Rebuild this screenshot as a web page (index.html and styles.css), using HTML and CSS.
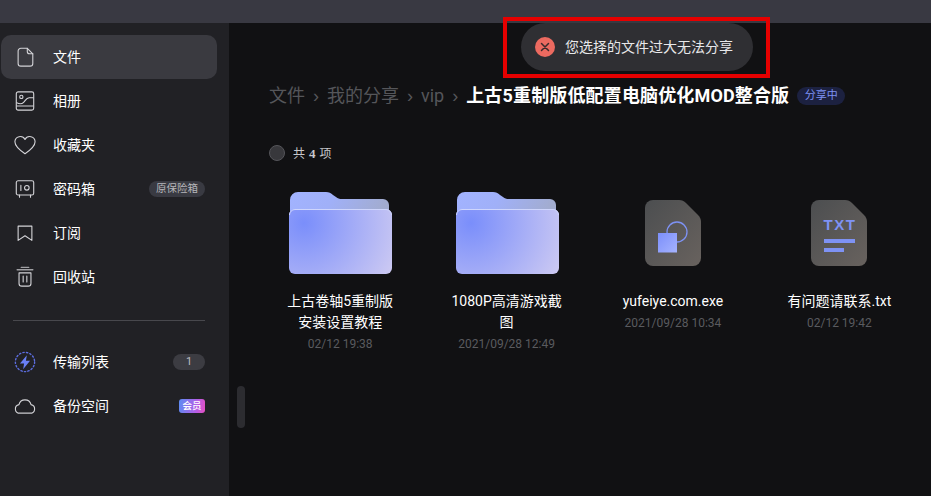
FILE: index.html
```html
<!DOCTYPE html>
<html lang="zh-CN">
<head>
<meta charset="utf-8">
<title>文件</title>
<link rel="stylesheet" href="styles.css">
</head>
<body>
<div class="app">
  <header class="topbar"></header>
  <div class="body">
    <aside class="sidebar">
      <nav class="nav">
        <a class="item active">
          <svg class="icon" viewBox="0 0 24 24"><path d="M7.500 2.500h7l6 6v10.500a3 3 0 0 1-3 3H7.500a3 3 0 0 1-3-3V5.500a3 3 0 0 1 3-3z"/><path d="M14.500 2.500v3.500a2.500 2.500 0 0 0 2.500 2.500h3.500"/></svg>
          <span class="label">文件</span>
        </a>
        <a class="item">
          <svg class="icon" viewBox="0 0 24 24"><rect x="2.500" y="2" width="19" height="20" rx="2"/><circle cx="8" cy="7.500" r="1.800"/><path d="M3 14c3 1.500 5.500 1.500 7.500-.5s3-5 6-5H21M3 17.500h18"/></svg>
          <span class="label">相册</span>
        </a>
        <a class="item">
          <svg class="icon" viewBox="0 0 24 24"><path d="M12 21.500C6 17.500 1 13.500 1 8.500A5.800 5.800 0 0 1 12 6a5.800 5.800 0 0 1 11 2.500c0 5-5 9-11 13z"/></svg>
          <span class="label">收藏夹</span>
        </a>
        <a class="item">
          <svg class="icon" viewBox="0 0 24 24"><rect x="2.500" y="3" width="19" height="15.500" rx="2"/><path d="M7.500 8v5.500M6 18.500v2.500M18 18.500v2.500"/><circle cx="14" cy="10.700" r="2.500"/></svg>
          <span class="label">密码箱</span>
          <span class="pill">原保险箱</span>
        </a>
        <a class="item">
          <svg class="icon" viewBox="0 0 24 24"><path d="M4.500 4.500h15v15.500l-7.500-5-7.500 5z"/></svg>
          <span class="label">订阅</span>
        </a>
        <a class="item">
          <svg class="icon" viewBox="0 0 24 24"><path class="thick" d="M3.500 4h17M8 1.500h8"/><path d="M5.500 7.500h13V19a3 3 0 0 1-3 3h-7a3 3 0 0 1-3-3zM10 11v6.500M14 11v6.500"/></svg>
          <span class="label">回收站</span>
        </a>
      </nav>
      <div class="divider"></div>
      <nav class="nav">
        <a class="item">
          <svg class="icon" viewBox="0 0 24 24"><circle class="dotted" cx="12" cy="12" r="10.500"/><path class="bolt" d="M14 4.500 6.500 13.500h4.500l-1 6.500 7.500-9.500h-4.500z"/></svg>
          <span class="label">传输列表</span>
          <span class="count">1</span>
        </a>
        <a class="item">
          <svg class="icon" viewBox="0 0 24 24"><path d="M6 20a4.800 4.800 0 0 1-.6-9.500 6.800 6.800 0 0 1 13.200 0A4.800 4.800 0 0 1 18 20z"/><path class="thick" d="M5.500 20h13"/></svg>
          <span class="label">备份空间</span>
          <span class="vip">会员</span>
        </a>
      </nav>
      <div class="scrollthumb"></div>
    </aside>
    <main class="main">
      <div class="crumbs">
        <span class="crumb">文件</span><span class="sep">›</span>
        <span class="crumb">我的分享</span><span class="sep">›</span>
        <span class="crumb">vip</span><span class="sep">›</span>
        <strong class="current">上古5重制版低配置电脑优化MOD整合版</strong>
        <span class="sharing">分享中</span>
      </div>
      <div class="summary">
        <span class="radio"></span>
        <span class="total">共 <b>4</b> 项</span>
      </div>
      <div class="grid">
        <article class="file">
          <svg class="thumb" viewBox="0 0 104 86">
            <use href="#folder-art"/>
          </svg>
          <div class="name">上古卷轴5重制版安装设置教程</div>
          <div class="date">02/12 19:38</div>
        </article>
        <article class="file">
          <svg class="thumb" viewBox="0 0 104 86">
            <use href="#folder-art"/>
          </svg>
          <div class="name">1080P高清游戏截图</div>
          <div class="date">2021/09/28 12:49</div>
        </article>
        <article class="file">
          <svg class="thumb" viewBox="0 0 104 86">
            <use href="#doc-art"/>
            <circle cx="56" cy="43" r="10" fill="none" stroke="#7e92f4" stroke-width="1.300"/>
            <rect x="37" y="44" width="19" height="19.500" fill="url(#sq)"/>
          </svg>
          <div class="name">yufeiye.com.exe</div>
          <div class="date">2021/09/28 10:34</div>
        </article>
        <article class="file">
          <svg class="thumb" viewBox="0 0 104 86">
            <use href="#doc-art"/>
            <text x="53" y="41" class="txt">TXT</text>
            <rect x="37" y="50" width="31" height="4" fill="#7e92f4"/>
            <rect x="37" y="59" width="20" height="4" fill="#7e92f4"/>
          </svg>
          <div class="name">有问题请联系.txt</div>
          <div class="date">02/12 19:42</div>
        </article>
      </div>
    </main>
  </div>
  <div class="toast">
    <span class="toast-icon"><svg viewBox="0 0 20 20"><path d="M6.500 6.500l7 7M13.500 6.500l-7 7"/></svg></span>
    <span class="toast-text">您选择的文件过大无法分享</span>
  </div>
  <div class="highlight"></div>
</div>
<svg class="defs" width="0" height="0" aria-hidden="true">
  <defs>
    <linearGradient id="back" x1="0" y1="0" x2="1" y2="0.200"><stop offset="0" stop-color="#a2b3ff"/><stop offset="0.450" stop-color="#a0b0f8"/><stop offset="1" stop-color="#a2accf"/></linearGradient>
    <radialGradient id="front" gradientUnits="userSpaceOnUse" cx="16" cy="34" r="105"><stop offset="0" stop-color="#7a8efb"/><stop offset="1" stop-color="#d0ccf2"/></radialGradient>
    <linearGradient id="doc" x1="0" y1="0" x2="1" y2="1"><stop offset="0" stop-color="#4c4e50"/><stop offset="1" stop-color="#68625e"/></linearGradient>
    <linearGradient id="sq" x1="0" y1="0" x2="1" y2="1"><stop offset="0" stop-color="#7c8ffa"/><stop offset="1" stop-color="#a5b3ff"/></linearGradient>
    <g id="folder-art">
      <path fill="url(#back)" d="M2 11a8 8 0 0 1 8-8h28c3 0 5 1 7 3l3 2c2 1.500 3 2 6 2h41a6 6 0 0 1 6 6v20H2z"/>
      <rect x="1" y="20" width="103" height="65" rx="6" fill="url(#front)"/>
      <path d="M1.500 26a5.500 5.500 0 0 1 5.500-5.500h91a5.500 5.500 0 0 1 5.500 5.500" fill="none" stroke="#cfd6fd" stroke-width="1"/>
    </g>
    <path id="doc-art" fill="url(#doc)" d="M24 19a8 8 0 0 1 8-8h26c3 0 5 1 7 3l12 12c2 2 3 4 3 7v36a8 8 0 0 1-8 8H32a8 8 0 0 1-8-8z"/>
  </defs>
</svg>
</body>
</html>
```
FILE: styles.css
```css
* { box-sizing: border-box; }
html, body { margin: 0; height: 100%; overflow: hidden; }
body {
  font-family: Roboto, "Noto Sans CJK SC", sans-serif;
  background: #111113;
  color: #fff;
}
.app { position: relative; width: 931px; height: 496px; display: flex; flex-direction: column; }
.topbar { height: 23px; flex: none; background: #393942; }
.body { flex: 1; display: flex; min-height: 0; }

.sidebar { position: relative; width: 229px; flex: none; background: #212125; padding: 12px 12px 0 1px; }
.nav { display: flex; flex-direction: column; }
.item { height: 44px; display: flex; align-items: center; padding: 0 12px 0 13px; border-radius: 10px; }
.item.active { background: #3a3a40; }
.icon { width: 22px; height: 22px; flex: none; fill: none; stroke: #d4d4d8; stroke-width: 1.200; stroke-linejoin: round; stroke-linecap: round; }
.icon .thick { stroke-width: 1.600; stroke: #a0a0a4; }
.icon .dotted { stroke: #5d6ee0; stroke-width: 1.500; stroke-dasharray: 1.500 2.400; }
.icon .bolt { fill: #6a80f5; stroke: none; }
.label { margin-left: 17px; font-size: 14px; line-height: 20px; color: #fff; }
.pill { margin-left: auto; height: 16px; padding: 0 7px; border-radius: 8px; background: #393a42; color: #b6b6ba; font-size: 10.500px; line-height: 16px; }
.count { margin-left: auto; width: 32px; height: 16px; border-radius: 8px; background: #3c3c42; color: #bdbdc1; font-size: 11px; line-height: 16px; text-align: center; }
.vip { margin-left: auto; width: 26px; height: 14px; border-radius: 3px; background: linear-gradient(100deg, #5b8cf2, #b15fe8 65%, #e84fc0); color: #fff; font-size: 9.500px; line-height: 14px; text-align: center; font-weight: 500; }
.divider { height: 1px; margin: 21px 12px 19px 12px; background: #48484d; }
.scrollthumb { position: absolute; left: 237px; top: 363px; width: 8px; height: 42px; border-radius: 4px; background: #2c2c30; }

.main { flex: 1; min-width: 0; padding: 58px 0 0 28px; }
.crumbs { height: 30px; margin-left: 12px; display: flex; align-items: center; white-space: nowrap; }
.crumb { font-size: 18px; line-height: 30px; color: #55565a; }
.sep { width: 22px; text-align: center; font-size: 18px; line-height: 30px; color: #55565a; font-family: "Liberation Sans", sans-serif; }
.current { font-size: 18px; line-height: 30px; font-weight: 700; color: #fff; letter-spacing: 0.150px; }
.sharing { margin-left: 8px; width: 48px; height: 18px; border-radius: 9px; background: #1c2140; color: #7e92f4; font-size: 11px; line-height: 18px; text-align: center; }

.summary { display: flex; align-items: center; margin: 32px 0 0 12px; height: 20px; }
.radio { width: 16px; height: 16px; border-radius: 50%; background: #38383c; border: 1px solid #55555a; }
.total { margin: 2px 0 0 8px; font-size: 12px; color: #c8c8cc; line-height: 20px; word-spacing: 1px; }
.total b { font-family: "Liberation Serif", serif; font-size: 13px; font-weight: 700; }

.grid { display: flex; margin-top: 26px; }
.file { width: 166.400px; flex: none; display: flex; flex-direction: column; align-items: center; }
.thumb { display: block; width: 104px; height: 86px; flex: none; overflow: visible; }
.name { width: 112px; margin-top: 16px; font-size: 14px; line-height: 21px; color: #fff; text-align: center; word-break: break-all; }
.file:nth-child(n+3) .name { width: 140px; }
.date { margin-top: 2px; font-size: 12px; line-height: 18px; color: #5a5b5f; white-space: nowrap; }
.txt { font-family: "Liberation Sans", sans-serif; font-weight: 700; font-size: 15px; letter-spacing: 1.500px; fill: #7e92f4; text-anchor: middle; }
.defs { position: absolute; }

.toast { position: absolute; left: 521px; top: 23px; width: 232px; height: 48px; border-radius: 24px; background: #2f2f33; display: flex; align-items: center; padding-left: 14px; }
.toast-icon { width: 20px; height: 20px; border-radius: 50%; background: #ec6a60; flex: none; }
.toast-icon svg { display: block; width: 20px; height: 20px; fill: none; stroke: #3a2a2c; stroke-width: 1.500; stroke-linecap: round; }
.toast-text { margin-left: 10px; font-size: 14px; color: #e8e8ea; white-space: nowrap; line-height: 20px; }
.highlight { position: absolute; left: 503px; top: 17px; width: 267px; height: 61px; border: 4px solid #e60000; pointer-events: none; }
```
